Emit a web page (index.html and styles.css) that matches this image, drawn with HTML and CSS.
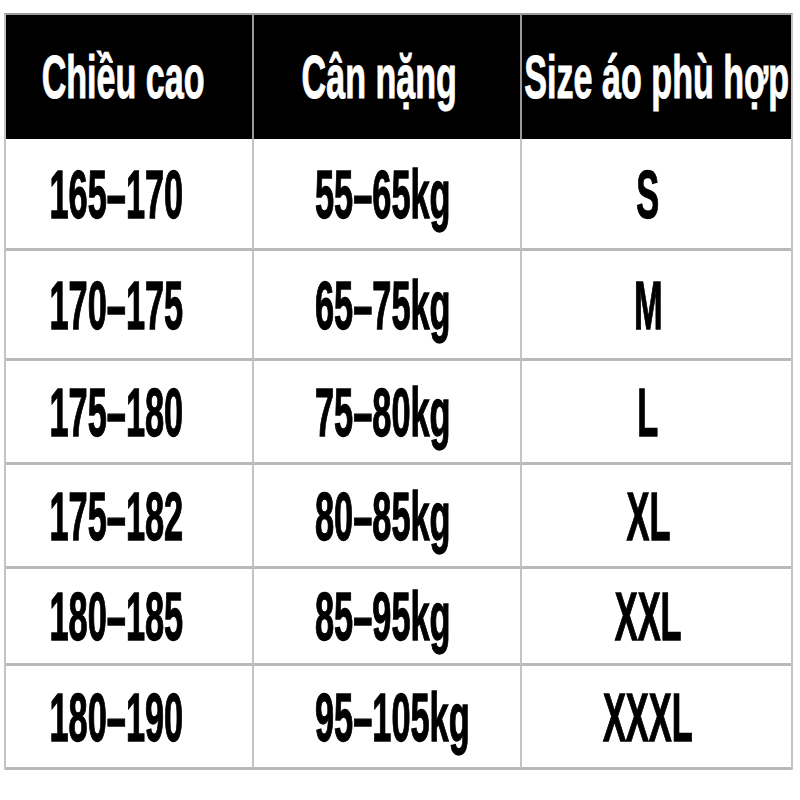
FILE: index.html
```html
<!DOCTYPE html>
<html lang="vi">
<head>
<meta charset="utf-8">
<title>Bảng size áo</title>
<link rel="stylesheet" href="styles.css">
</head>
<body>
<div class="sheet">
  <div class="table">
    <div class="cell hd c1"><span class="t">Chiều cao</span></div>
    <div class="cell hd c2"><span class="t">Cân nặng</span></div>
    <div class="cell hd c3"><span class="t">Size áo phù hợp</span></div>

    <div class="cell bd c1"><span class="t">165–170</span></div>
    <div class="cell bd c2"><span class="t">55–65kg</span></div>
    <div class="cell bd c3"><span class="t">S</span></div>

    <div class="cell bd c1"><span class="t">170–175</span></div>
    <div class="cell bd c2"><span class="t">65–75kg</span></div>
    <div class="cell bd c3"><span class="t">M</span></div>

    <div class="cell bd c1"><span class="t">175–180</span></div>
    <div class="cell bd c2"><span class="t">75–80kg</span></div>
    <div class="cell bd c3"><span class="t">L</span></div>

    <div class="cell bd c1"><span class="t">175–182</span></div>
    <div class="cell bd c2"><span class="t">80–85kg</span></div>
    <div class="cell bd c3"><span class="t">XL</span></div>

    <div class="cell bd c1"><span class="t">180–185</span></div>
    <div class="cell bd c2"><span class="t">85–95kg</span></div>
    <div class="cell bd c3"><span class="t">XXL</span></div>

    <div class="cell bd c1"><span class="t">180–190</span></div>
    <div class="cell bd c2"><span class="t">95–105kg</span></div>
    <div class="cell bd c3"><span class="t">XXXL</span></div>
  </div>
</div>
</body>
</html>
```
FILE: styles.css
```css
html, body {
  margin: 0;
  padding: 0;
  background: #ffffff;
}

.sheet {
  padding: 13px 0 0 4px;
  font-family: "Liberation Sans", Arial, sans-serif;
  font-weight: 700;
}

.table {
  display: grid;
  width: 789px;
  box-sizing: border-box;
  grid-template-columns: 248px 268px 269px;
  grid-template-rows: 124px 112px 110px 104px 104px 97px 104px;
  border-top: 2px solid #9c9c9c;
  border-left: 2px solid #c4c4c4;
  border-right: 2px solid #c4c4c4;
}

.cell {
  display: flex;
  align-items: center;
  justify-content: center;
  box-sizing: border-box;
  overflow: visible;
  min-width: 0;
}

.c1, .c2 {
  border-right: 2px solid #c4c4c4;
}

.hd {
  background: #000000;
  color: #ffffff;
}

.hd.c1, .hd.c2 {
  border-right-color: #9a9a9a;
}

.bd {
  color: #000000;
  border-bottom: 3px solid #b9b9b9;
}

.t {
  display: inline-block;
  white-space: nowrap;
  line-height: 1;
}

.hd .t {
  font-size: 62px;
  transform: scaleX(0.55);
  -webkit-text-stroke: 1px #ffffff;
}

.bd .t {
  font-size: 68px;
  transform: scaleX(0.505);
  -webkit-text-stroke: 1.3px #000000;
}

.hd.c1 { padding-right: 12px; }
.hd.c2 { padding-right: 16px; }

.bd.c1 { padding-right: 26px; }

.bd.c2 {
  justify-content: flex-start;
  padding-left: 61px;
}
.bd.c2 .t { transform-origin: left center; }

.bd.c3 { padding-right: 17px; }
```
